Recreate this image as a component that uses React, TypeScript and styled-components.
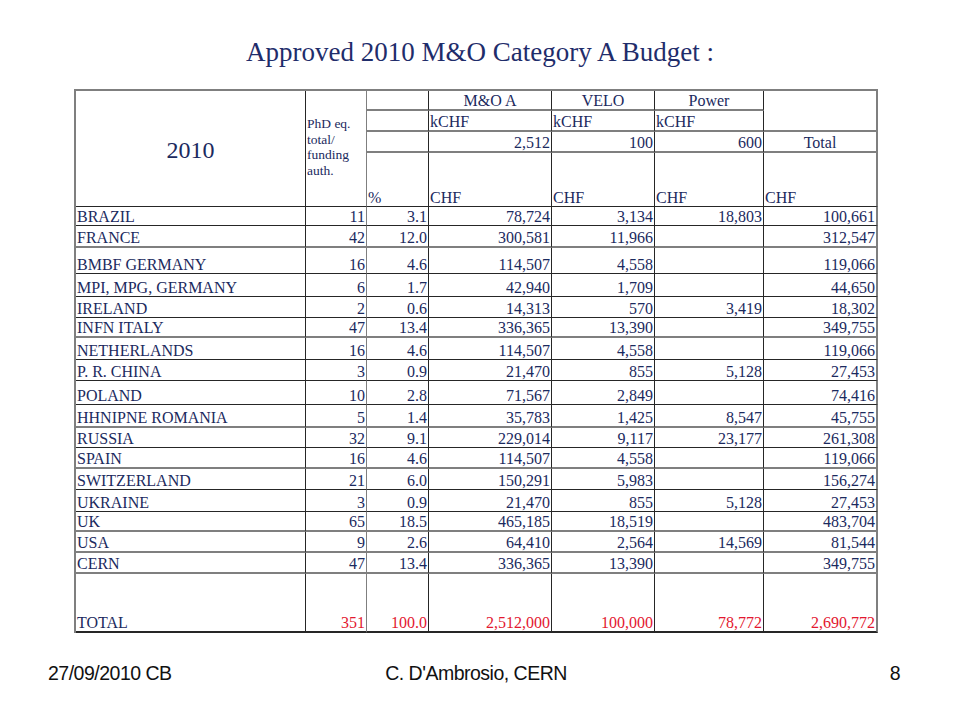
import React from "react";
import styled, { createGlobalStyle, css } from "styled-components";

const navy = "#1b2a5e";
const red = "#e3182f";
const grey = "#7f7f7f";
const ink = "#262626";

type Line = "k" | "g";

const rows: [string[], number, Line][] = [
  [["BRAZIL", "11", "3.1", "78,724", "3,134", "18,803", "100,661"], 19, "k"],
  [["FRANCE", "42", "12.0", "300,581", "11,966", "", "312,547"], 22, "g"],
  [["BMBF GERMANY", "16", "4.6", "114,507", "4,558", "", "119,066"], 26, "k"],
  [["MPI, MPG, GERMANY", "6", "1.7", "42,940", "1,709", "", "44,650"], 23, "k"],
  [["IRELAND", "2", "0.6", "14,313", "570", "3,419", "18,302"], 21, "k"],
  [["INFN ITALY", "47", "13.4", "336,365", "13,390", "", "349,755"], 20, "g"],
  [["NETHERLANDS", "16", "4.6", "114,507", "4,558", "", "119,066"], 22, "k"],
  [["P. R. CHINA", "3", "0.9", "21,470", "855", "5,128", "27,453"], 21, "k"],
  [["POLAND", "10", "2.8", "71,567", "2,849", "", "74,416"], 24, "k"],
  [["HHNIPNE ROMANIA", "5", "1.4", "35,783", "1,425", "8,547", "45,755"], 23, "g"],
  [["RUSSIA", "32", "9.1", "229,014", "9,117", "23,177", "261,308"], 20, "k"],
  [["SPAIN", "16", "4.6", "114,507", "4,558", "", "119,066"], 21, "g"],
  [["SWITZERLAND", "21", "6.0", "150,291", "5,983", "", "156,274"], 21, "k"],
  [["UKRAINE", "3", "0.9", "21,470", "855", "5,128", "27,453"], 22, "k"],
  [["UK", "65", "18.5", "465,185", "18,519", "", "483,704"], 20, "g"],
  [["USA", "9", "2.6", "64,410", "2,564", "14,569", "81,544"], 21, "g"],
  [["CERN", "47", "13.4", "336,365", "13,390", "", "349,755"], 21, "g"],
];

const total = ["TOTAL", "351", "100.0", "2,512,000", "100,000", "78,772", "2,690,772"];

const GlobalStyle = createGlobalStyle`
  html, body {
    margin: 0;
    padding: 0;
    background: #ffffff;
  }
  body {
    font-family: "Liberation Serif", "Times New Roman", serif;
  }
`;

const Slide = styled.div`
  width: 960px;
  height: 720px;
  display: flex;
  flex-direction: column;
  background: #ffffff;
  overflow: hidden;
`;

const Title = styled.h1`
  margin: 36px 0 0 0;
  height: 32px;
  line-height: 32px;
  text-align: center;
  font-size: 27px;
  font-weight: normal;
  color: #1f2d6b;
`;

const Grid = styled.div<{ $rows: string }>`
  margin: 21px 0 0 74px;
  width: 802px;
  display: grid;
  grid-template-columns: 230px 61px 62px 123px 103px 109px 114px;
  grid-template-rows: ${(p) => p.$rows};
  border-top: 2px solid ${grey};
  border-left: 2px solid ${grey};
  font-size: 16px;
  color: ${navy};
`;

type Align = "left" | "center" | "right";
type VAlign = "start" | "center" | "end";

const rightLine = (col: number) => {
  if (col === 2) return `1px solid ${grey}`;
  if (col === 7) return `2px solid ${grey}`;
  return `1px solid ${ink}`;
};

const Cell = styled.div<{
  $col: number;
  $align?: Align;
  $v?: VAlign;
  $line?: Line | "none" | "thick";
  $span?: number;
  $red?: boolean;
}>`
  box-sizing: border-box;
  display: flex;
  align-items: ${(p) => (p.$v === "center" ? "center" : p.$v === "start" ? "flex-start" : "flex-end")};
  justify-content: ${(p) =>
    p.$align === "right" ? "flex-end" : p.$align === "center" ? "center" : "flex-start"};
  padding: 0 1px;
  line-height: 17px;
  white-space: nowrap;
  border-right: ${(p) => rightLine(p.$col)};
  ${(p) =>
    p.$line === "g"
      ? css`border-bottom: 2px solid ${grey};`
      : p.$line === "none"
      ? css`border-bottom: none;`
      : p.$line === "thick"
      ? css`border-bottom: 2px solid ${ink};`
      : css`border-bottom: 1px solid ${ink};`}
  ${(p) => p.$span && css`grid-row: span ${p.$span};`}
  ${(p) => p.$red && css`color: ${red};`}
`;

const YearCell = styled(Cell)`
  font-size: 24px;
  padding-top: 3px;
`;

const NoteCell = styled(Cell)`
  flex-direction: column;
  justify-content: center;
  align-items: flex-start;
  font-size: 13.5px;
  line-height: 15.5px;
  white-space: normal;
  padding: 0 0 3px 1px;
`;

const Footer = styled.footer`
  margin-top: auto;
  padding: 0 0 36px 0;
  display: grid;
  grid-template-columns: 1fr 1fr 1fr;
  align-items: center;
  font-family: "Liberation Sans", Arial, sans-serif;
  font-size: 19.5px;
  line-height: 22px;
  color: #111111;
  letter-spacing: -0.5px;
`;

const FootLeft = styled.span`
  padding-left: 48px;
`;

const FootCenter = styled.span`
  text-align: center;
  padding-right: 8px;
`;

const FootRight = styled.span`
  text-align: right;
  padding-right: 60px;
`;

const header = (
  <>
    <YearCell $col={1} $span={4} $align="center" $v="center">
      2010
    </YearCell>
    <NoteCell $col={2} $span={4}>
      <span>PhD eq.</span>
      <span>total/</span>
      <span>funding</span>
      <span>auth.</span>
    </NoteCell>
    <Cell $col={3} $line="g" />
    <Cell $col={4} $align="center" $line="g">M&amp;O A</Cell>
    <Cell $col={5} $align="center" $line="g">VELO</Cell>
    <Cell $col={6} $align="center" $line="g">Power</Cell>
    <Cell $col={7} $span={2} $line="g" />
    <Cell $col={3} $line="g" />
    <Cell $col={4} $line="g">kCHF</Cell>
    <Cell $col={5} $line="g">kCHF</Cell>
    <Cell $col={6} $line="g">kCHF</Cell>
    <Cell $col={3} $line="g" />
    <Cell $col={4} $align="right" $line="g">2,512</Cell>
    <Cell $col={5} $align="right" $line="g">100</Cell>
    <Cell $col={6} $align="right" $line="g">600</Cell>
    <Cell $col={7} $align="center" $line="g">Total</Cell>
    <Cell $col={3}>%</Cell>
    <Cell $col={4}>CHF</Cell>
    <Cell $col={5}>CHF</Cell>
    <Cell $col={6}>CHF</Cell>
    <Cell $col={7}>CHF</Cell>
  </>
);

export default function App() {
  const template = ["20px", "21px", "21px", "54px", ...rows.map((r) => `${r[1]}px`), "59px"].join(" ");
  return (
    <Slide>
      <GlobalStyle />
      <Title>Approved 2010 M&amp;O Category A Budget :</Title>
      <Grid $rows={template}>
        {header}
        {rows.map(([cells, , line]) =>
          cells.map((v, i) => (
            <Cell key={cells[0] + i} $col={i + 1} $align={i === 0 ? "left" : "right"} $line={line}>
              {v}
            </Cell>
          ))
        )}
        {total.map((v, i) => (
          <Cell key={"t" + i} $col={i + 1} $align={i === 0 ? "left" : "right"} $line="thick" $red={i > 0}>
            {v}
          </Cell>
        ))}
      </Grid>
      <Footer>
        <FootLeft>27/09/2010 CB</FootLeft>
        <FootCenter>C. D'Ambrosio, CERN</FootCenter>
        <FootRight>8</FootRight>
      </Footer>
    </Slide>
  );
}
